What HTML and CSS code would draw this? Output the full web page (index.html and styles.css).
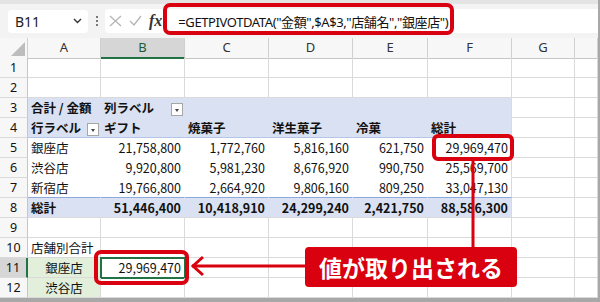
FILE: index.html
```html
<!DOCTYPE html>
<html lang="ja">
<head>
    <meta charset="UTF-8" />
    <title>GETPIVOTDATA</title>
    <link rel="stylesheet" href="styles.css">
</head>
<body>
<div class="app">
    <div class="fbar">
        <div class="namebox">
            <span>B11</span>
            <svg class="chev" width="9" height="6" viewBox="0 0 9 6"><path d="M1 1 L4.5 4.5 L8 1" fill="none" stroke="#333" stroke-width="1.4"/></svg>
        </div>
        <div class="dots"><i></i><i></i><i></i></div>
        <div class="finput">
            <svg class="ic" width="13" height="12" viewBox="0 0 13 12"><path d="M1 1 L12 11 M12 1 L1 11" stroke="#b5b5b5" stroke-width="1.3"/></svg>
            <svg class="ic" width="13" height="12" viewBox="0 0 13 12"><path d="M1 6 L5 10 L12 1" fill="none" stroke="#b5b5b5" stroke-width="1.3"/></svg>
            <span class="fx">fx</span>
            <span class="formula">=GETPIVOTDATA("金額",$A$3,"店舗名","銀座店")</span>
        </div>
    </div>

    <div class="sheet">
        <div class="row hdr">
            <div class="corner"><svg width="14" height="14" viewBox="0 0 14 14"><path d="M14 0 L14 14 L0 14 Z" fill="#bdbdbd"/></svg></div>
            <div class="ch">A</div><div class="ch on">B</div><div class="ch">C</div><div class="ch">D</div>
            <div class="ch">E</div><div class="ch">F</div><div class="ch">G</div><div class="ch"></div>
        </div>
        <div class="row">
            <div class="rh">1</div><div class="c"></div><div class="c"></div><div class="c"></div><div class="c"></div><div class="c"></div><div class="c"></div><div class="c"></div><div class="c"></div>
        </div>
        <div class="row">
            <div class="rh">2</div><div class="c"></div><div class="c"></div><div class="c"></div><div class="c"></div><div class="c"></div><div class="c"></div><div class="c"></div><div class="c"></div>
        </div>
        <div class="row">
            <div class="rh">3</div>
            <div class="c pv b">合計 / 金額</div>
            <div class="c pv b drop">列ラベル<span class="dd"></span></div>
            <div class="c pv"></div><div class="c pv"></div><div class="c pv"></div><div class="c pv last"></div>
            <div class="c"></div><div class="c"></div>
        </div>
        <div class="row">
            <div class="rh">4</div>
            <div class="c pv hd b drop">行ラベル<span class="dd"></span></div>
            <div class="c pv hd b">ギフト</div>
            <div class="c pv hd b">焼菓子</div>
            <div class="c pv hd b">洋生菓子</div>
            <div class="c pv hd b">冷菓</div>
            <div class="c pv hd b last">総計</div>
            <div class="c"></div><div class="c"></div>
        </div>
        <div class="row">
            <div class="rh">5</div>
            <div class="c pw">銀座店</div>
            <div class="c pw n">21,758,800</div><div class="c pw n">1,772,760</div><div class="c pw n">5,816,160</div>
            <div class="c pw n">621,750</div><div class="c pw n last">29,969,470</div>
            <div class="c"></div><div class="c"></div>
        </div>
        <div class="row">
            <div class="rh">6</div>
            <div class="c pw">渋谷店</div>
            <div class="c pw n">9,920,800</div><div class="c pw n">5,981,230</div><div class="c pw n">8,676,920</div>
            <div class="c pw n">990,750</div><div class="c pw n last">25,569,700</div>
            <div class="c"></div><div class="c"></div>
        </div>
        <div class="row">
            <div class="rh">7</div>
            <div class="c pw ft">新宿店</div>
            <div class="c pw ft n">19,766,800</div><div class="c pw ft n">2,664,920</div><div class="c pw ft n">9,806,160</div>
            <div class="c pw ft n">809,250</div><div class="c pw ft n last">33,047,130</div>
            <div class="c"></div><div class="c"></div>
        </div>
        <div class="row">
            <div class="rh">8</div>
            <div class="c pv tot b">総計</div>
            <div class="c pv tot b n">51,446,400</div><div class="c pv tot b n">10,418,910</div><div class="c pv tot b n">24,299,240</div>
            <div class="c pv tot b n">2,421,750</div><div class="c pv tot b n last">88,586,300</div>
            <div class="c"></div><div class="c"></div>
        </div>
        <div class="row">
            <div class="rh">9</div><div class="c"></div><div class="c"></div><div class="c"></div><div class="c"></div><div class="c"></div><div class="c"></div><div class="c"></div><div class="c"></div>
        </div>
        <div class="row">
            <div class="rh">10</div>
            <div class="c over">店舗別合計</div>
            <div class="c"></div><div class="c"></div><div class="c"></div><div class="c"></div><div class="c"></div><div class="c"></div><div class="c"></div>
        </div>
        <div class="row">
            <div class="rh on">11</div>
            <div class="c green">銀座店</div>
            <div class="c n active">29,969,470</div>
            <div class="c"></div><div class="c"></div><div class="c"></div><div class="c"></div><div class="c"></div><div class="c"></div>
        </div>
        <div class="row">
            <div class="rh">12</div>
            <div class="c green">渋谷店</div>
            <div class="c"></div><div class="c"></div><div class="c"></div><div class="c"></div><div class="c"></div><div class="c"></div><div class="c"></div>
        </div>
    </div>

    <!-- annotations -->
    <div class="mark mark-formula"></div>
    <div class="mark mark-f5"></div>
    <div class="mark mark-b11"></div>
    <svg class="lines" width="600" height="302" viewBox="0 0 600 302">
        <path d="M473 160 L473 248" stroke="#d9000f" stroke-width="3"/>
        <path d="M192 266 L306 266" stroke="#d9000f" stroke-width="3"/>
        <path d="M203 257 L193 266 L203 275" fill="none" stroke="#d9000f" stroke-width="3"/>
    </svg>
    <div class="callout">値が取り出される</div>
</div>
</body>
</html>
```

FILE: styles.css
```css
body {
    margin: 0;
    background: #fff;
    font-family: 'Noto Sans CJK JP', sans-serif;
}

.app {
    position: relative;
    width: 600px;
    height: 302px;
    overflow: hidden;
    box-sizing: border-box;
    border-right: 2px solid #a8a8a8;
    border-bottom: 4px solid #a8a8a8;
}

/* formula bar */
.fbar {
    height: 38px;
    box-sizing: border-box;
    border-top: 4px solid #e4e4e4;
    background: #f3f3f3;
    display: flex;
    align-items: center;
    padding-left: 8px;
}
.namebox {
    width: 80px;
    height: 23px;
    box-sizing: border-box;
    background: #fff;
    border-radius: 4px;
    display: flex;
    align-items: center;
    justify-content: space-between;
    padding: 0 6px 0 7px;
    font-family: 'Noto Sans', sans-serif;
    font-size: 14px;
    color: #222;
}
.dots {
    width: 17px;
    display: flex;
    flex-direction: column;
    align-items: center;
    gap: 2px;
}
.dots i {
    width: 2px;
    height: 2px;
    background: #777;
}
.finput {
    flex: 1;
    height: 24px;
    background: #fff;
    border-radius: 4px 0 0 4px;
    display: flex;
    align-items: center;
    padding-left: 4px;
}
.ic { margin-right: 7px; }
.fx {
    font-family: 'Liberation Serif', serif;
    font-style: italic;
    font-weight: bold;
    font-size: 16px;
    color: #333;
}
.formula {
    margin-left: 16px;
    font-family: 'Noto Sans', 'Noto Sans CJK JP', sans-serif;
    font-size: 13px;
    letter-spacing: -0.4px;
    color: #111;
    white-space: nowrap;
}

/* sheet grid */
.row {
    display: grid;
    grid-template-columns: 28px 73px 84px 84px 84px 75px 84px 63px 1fr;
    height: 20px;
}
.row > div {
    box-sizing: border-box;
    border-right: 1px solid #dadada;
    border-bottom: 1px solid #dadada;
    white-space: nowrap;
    font-size: 12.5px;
    line-height: 19px;
    color: #111;
}
.hdr > div {
    background: #f7f7f7;
    border-bottom-color: #c6c6c6;
    border-right-color: #d0d0d0;
    text-align: center;
    font-family: 'Noto Sans', sans-serif;
    font-size: 13px;
    color: #333;
}
.hdr .ch.on {
    background: #d6d6d6;
    border-bottom: 2px solid #217346;
    color: #1d5c38;
}
.hdr .corner {
    display: flex;
    align-items: flex-end;
    justify-content: flex-end;
    padding: 0 2px 2px 0;
}
.rh {
    background: #f7f7f7;
    text-align: center;
    font-family: 'Noto Sans', sans-serif;
    border-right-color: #c6c6c6 !important;
    color: #333;
}
.rh.on {
    background: #d6d6d6;
    border-right: 2px solid #217346 !important;
}

.c { padding: 0 3px; overflow: hidden; }
.c.over { overflow: visible; }
.n { text-align: right; }
.b { font-weight: bold; }

/* pivot table */
.pv {
    background: #d9e1f2;
    border-right-color: transparent !important;
    border-bottom-color: transparent !important;
}
.pw {
    border-right-color: transparent !important;
    border-bottom-color: transparent !important;
}
.pv.last, .pw.last { border-right-color: #dadada !important; }
.pv.hd { border-bottom-color: #b4c6e7 !important; }
.pw.ft { border-bottom-color: #8ea9db !important; }
.pv.tot { border-bottom-color: #dadada !important; }

.drop {
    display: flex;
    align-items: center;
    justify-content: space-between;
    padding-right: 1px;
}
.dd {
    width: 12px;
    height: 13px;
    box-sizing: border-box;
    border: 1px solid #a6a6a6;
    background: #fff;
    position: relative;
    margin-top: 4px;
}
.dd::after {
    content: '';
    position: absolute;
    left: 3px;
    top: 5px;
    border-left: 2.5px solid transparent;
    border-right: 2.5px solid transparent;
    border-top: 3px solid #444;
}

.green {
    background: #e2efda;
    text-align: center;
}
.active {
    outline: 2px solid #217346;
    outline-offset: -1px;
}

/* annotations */
.mark {
    position: absolute;
    box-sizing: border-box;
    border: 4px solid #d9000f;
    border-radius: 7px;
}
.mark-formula { left: 163px; top: 3px; width: 291px; height: 32px; }
.mark-f5 { left: 432px; top: 134px; width: 82px; height: 27px; border-radius: 6px; }
.mark-b11 { left: 94px; top: 250px; width: 95px; height: 35px; }
.lines {
    position: absolute;
    left: 0;
    top: 0;
}
.callout {
    position: absolute;
    left: 305px;
    top: 247px;
    width: 212px;
    height: 40px;
    background: #d9000f;
    border-radius: 4px;
    color: #fff;
    font-weight: bold;
    font-size: 23px;
    line-height: 40px;
    text-align: center;
}
```
